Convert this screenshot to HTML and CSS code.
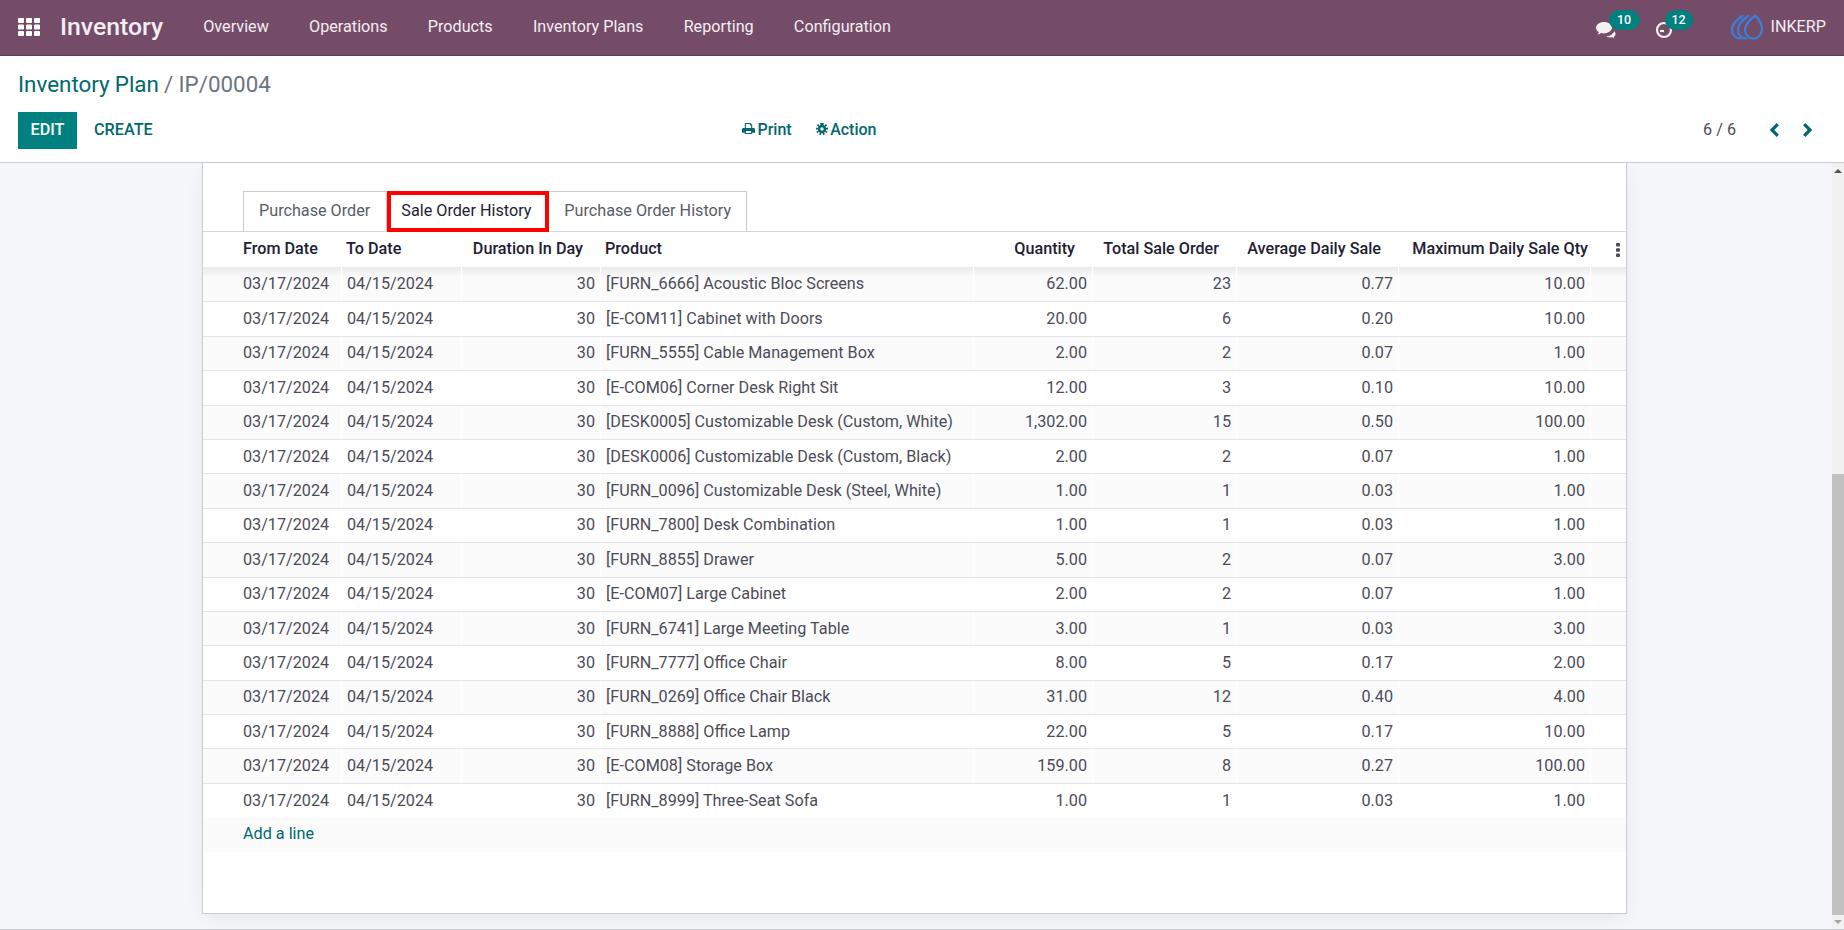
FILE: index.html
```html
<!DOCTYPE html>
<html>
	<head>
		<meta charset="UTF-8">
		<title>Inventory Plan / IP/00004</title>
		<link rel="stylesheet" href="styles.css">
	</head>
	<body>
		<header class="navbar">
			<svg class="apps" viewBox="0 0 22 18" width="22" height="18" fill="#fff">
				<rect x="0" y="0" width="6" height="5" rx="1"/><rect x="8" y="0" width="6" height="5" rx="1"/><rect x="16" y="0" width="6" height="5" rx="1"/>
				<rect x="0" y="6.5" width="6" height="5" rx="1"/><rect x="8" y="6.5" width="6" height="5" rx="1"/><rect x="16" y="6.5" width="6" height="5" rx="1"/>
				<rect x="0" y="13" width="6" height="5" rx="1"/><rect x="8" y="13" width="6" height="5" rx="1"/><rect x="16" y="13" width="6" height="5" rx="1"/>
			</svg>
			<span class="brand">Inventory</span>
			<nav class="menu">
				<a>Overview</a>
				<a>Operations</a>
				<a>Products</a>
				<a>Inventory Plans</a>
				<a>Reporting</a>
				<a>Configuration</a>
			</nav>
			<div class="systray">
				<div class="tray-item tray-chat">
					<svg viewBox="0 0 20 18" width="20" height="18"><path fill="#f4f1f3" d="M8 1C3.600 1 0 3.600 0 6.800c0 1.800 1.100 3.400 2.900 4.500-.3 1-.8 1.800-1.500 2.500 1.400-.2 2.800-.8 3.900-1.700.9.200 1.800.3 2.700.3 4.400 0 8-2.600 8-5.800S12.400 1 8 1z"/><path fill="#f4f1f3" stroke="#744c68" d="M18 9.500c1.300 1 2 2.200 2 3.500 0 1.300-.8 2.500-2.100 3.300.2.600.5 1.100 1 1.600-1-.1-2-.5-2.700-1.100-.6.100-1.200.2-1.800.2-2 0-3.800-.8-4.800-2 4.400-.1 7.800-2.400 8.400-5.500z"/></svg>
					<span class="badge badge-chat">10</span>
				</div>
				<div class="tray-item tray-clock">
					<svg viewBox="0 0 18 18" width="18" height="18" fill="none" stroke="#f4f1f3" stroke-width="2.200"><circle cx="9" cy="9" r="7"/><path d="M5 10h4"/></svg>
					<span class="badge badge-clock">12</span>
				</div>
				<svg class="logo" viewBox="0 0 32 26" width="32" height="26" fill="none" stroke="#3a80d8" stroke-width="2.200" stroke-linecap="round">
					<path d="M24.500 1.500c2.500 3 6.500 7 6.500 13 0 5.500-3.500 10-8.500 10-5 0-8.500-4-8.500-8.500 0-5.500 6-11.500 10.500-14.500z"/>
					<path d="M17 2c-5 3.500-10 9-10 14 0 4.500 3.500 8.500 8.500 8.500"/>
					<path d="M11.500 2C6 5.500 1 10.500 1 16c0 4.500 3.500 8.500 8.500 8.500"/>
				</svg>
				<span class="company">INKERP</span>
			</div>
		</header>

		<section class="control-panel">
			<div class="breadcrumb"><a>Inventory Plan</a> <span class="crumb-sep">/</span> <span class="crumb-current">IP/00004</span></div>
			<div class="panel-row">
				<div class="panel-left">
					<button class="btn btn-edit">EDIT</button>
					<button class="btn btn-create">CREATE</button>
				</div>
				<div class="panel-center">
					<a class="panel-link link-print">
						<svg viewBox="0 0 14 14" width="13" height="13" fill="#00696e" fill-rule="evenodd"><path d="M3 1h6l2 2v3.500h1.500A1.500 1.500 0 0 1 14 8v3.500h-3V13H3v-1.500H0V8a1.500 1.500 0 0 1 1.500-1.500H3zM4.200 2.200v4.300h5.600V3.600H8.500V2.200zM4.200 9.800v2h5.600v-2z"/></svg>
						Print
					</a>
					<a class="panel-link link-action">
						<svg viewBox="0 0 14 14" width="12" height="12" fill="none" stroke="#00696e"><circle cx="7" cy="7" r="3.500" stroke-width="3"/><path stroke-width="2.400" stroke-dasharray="2 1.920" d="M7 1a6 6 0 1 1-.01 0"/></svg>
						Action
					</a>
				</div>
				<div class="pager">
					<span class="pager-value">6 / 6</span>
					<svg viewBox="0 0 10 14" width="10" height="14" fill="none" stroke="#00696e" stroke-width="3.200"><path d="M8.800 1.200 3 7l5.800 5.800"/></svg>
					<svg viewBox="0 0 10 14" width="10" height="14" fill="none" stroke="#00696e" stroke-width="3.200"><path d="M1.200 1.200 7 7l-5.800 5.800"/></svg>
				</div>
			</div>
		</section>

		<div class="content">
			<main class="view">
				<div class="sheet">
					<ul class="tabs">
						<li>Purchase Order</li>
						<li class="active">Sale Order History</li>
						<li>Purchase Order History</li>
					</ul>
					<table class="lines">
						<colgroup>
							<col class="c-from"><col class="c-to"><col class="c-dur"><col class="c-prod"><col class="c-qty"><col class="c-total"><col class="c-avg"><col class="c-max"><col class="c-opt">
						</colgroup>
						<thead>
							<tr>
								<th class="first">From Date</th>
								<th>To Date</th>
								<th class="num">Duration In Day</th>
								<th>Product</th>
								<th class="num">Quantity</th>
								<th class="num">Total Sale Order</th>
								<th class="num">Average Daily Sale</th>
								<th class="num th-max">Maximum Daily Sale Qty</th>
								<th class="th-opt"><svg viewBox="0 0 4 14" width="4" height="14" fill="#4c4c5c"><rect width="4" height="3.500" rx="1" y="0"/><rect width="4" height="3.500" rx="1" y="5.200"/><rect width="4" height="3.500" rx="1" y="10.400"/></svg></th>
							</tr>
						</thead>
						<tbody>
							<tr><td class="first">03/17/2024</td><td>04/15/2024</td><td class="num">30</td><td>[FURN_6666] Acoustic Bloc Screens</td><td class="num">62.00</td><td class="num">23</td><td class="num">0.77</td><td class="num">10.00</td><td></td></tr>
							<tr><td class="first">03/17/2024</td><td>04/15/2024</td><td class="num">30</td><td>[E-COM11] Cabinet with Doors</td><td class="num">20.00</td><td class="num">6</td><td class="num">0.20</td><td class="num">10.00</td><td></td></tr>
							<tr><td class="first">03/17/2024</td><td>04/15/2024</td><td class="num">30</td><td>[FURN_5555] Cable Management Box</td><td class="num">2.00</td><td class="num">2</td><td class="num">0.07</td><td class="num">1.00</td><td></td></tr>
							<tr><td class="first">03/17/2024</td><td>04/15/2024</td><td class="num">30</td><td>[E-COM06] Corner Desk Right Sit</td><td class="num">12.00</td><td class="num">3</td><td class="num">0.10</td><td class="num">10.00</td><td></td></tr>
							<tr><td class="first">03/17/2024</td><td>04/15/2024</td><td class="num">30</td><td>[DESK0005] Customizable Desk (Custom, White)</td><td class="num">1,302.00</td><td class="num">15</td><td class="num">0.50</td><td class="num">100.00</td><td></td></tr>
							<tr><td class="first">03/17/2024</td><td>04/15/2024</td><td class="num">30</td><td>[DESK0006] Customizable Desk (Custom, Black)</td><td class="num">2.00</td><td class="num">2</td><td class="num">0.07</td><td class="num">1.00</td><td></td></tr>
							<tr><td class="first">03/17/2024</td><td>04/15/2024</td><td class="num">30</td><td>[FURN_0096] Customizable Desk (Steel, White)</td><td class="num">1.00</td><td class="num">1</td><td class="num">0.03</td><td class="num">1.00</td><td></td></tr>
							<tr><td class="first">03/17/2024</td><td>04/15/2024</td><td class="num">30</td><td>[FURN_7800] Desk Combination</td><td class="num">1.00</td><td class="num">1</td><td class="num">0.03</td><td class="num">1.00</td><td></td></tr>
							<tr><td class="first">03/17/2024</td><td>04/15/2024</td><td class="num">30</td><td>[FURN_8855] Drawer</td><td class="num">5.00</td><td class="num">2</td><td class="num">0.07</td><td class="num">3.00</td><td></td></tr>
							<tr><td class="first">03/17/2024</td><td>04/15/2024</td><td class="num">30</td><td>[E-COM07] Large Cabinet</td><td class="num">2.00</td><td class="num">2</td><td class="num">0.07</td><td class="num">1.00</td><td></td></tr>
							<tr><td class="first">03/17/2024</td><td>04/15/2024</td><td class="num">30</td><td>[FURN_6741] Large Meeting Table</td><td class="num">3.00</td><td class="num">1</td><td class="num">0.03</td><td class="num">3.00</td><td></td></tr>
							<tr><td class="first">03/17/2024</td><td>04/15/2024</td><td class="num">30</td><td>[FURN_7777] Office Chair</td><td class="num">8.00</td><td class="num">5</td><td class="num">0.17</td><td class="num">2.00</td><td></td></tr>
							<tr><td class="first">03/17/2024</td><td>04/15/2024</td><td class="num">30</td><td>[FURN_0269] Office Chair Black</td><td class="num">31.00</td><td class="num">12</td><td class="num">0.40</td><td class="num">4.00</td><td></td></tr>
							<tr><td class="first">03/17/2024</td><td>04/15/2024</td><td class="num">30</td><td>[FURN_8888] Office Lamp</td><td class="num">22.00</td><td class="num">5</td><td class="num">0.17</td><td class="num">10.00</td><td></td></tr>
							<tr><td class="first">03/17/2024</td><td>04/15/2024</td><td class="num">30</td><td>[E-COM08] Storage Box</td><td class="num">159.00</td><td class="num">8</td><td class="num">0.27</td><td class="num">100.00</td><td></td></tr>
							<tr><td class="first">03/17/2024</td><td>04/15/2024</td><td class="num">30</td><td>[FURN_8999] Three-Seat Sofa</td><td class="num">1.00</td><td class="num">1</td><td class="num">0.03</td><td class="num">1.00</td><td></td></tr>
							<tr class="add-row"><td class="first" colspan="9"><a>Add a line</a></td></tr>
						</tbody>
					</table>
				</div>
			</main>
			<div class="scrollbar">
				<span class="arrow-up"></span>
				<div class="track"><div class="thumb"></div></div>
				<span class="arrow-down"></span>
			</div>
		</div>
	</body>
</html>
```

FILE: styles.css
```css
*{
	margin:0; padding:0;
	box-sizing:border-box;
	list-style:none;
}

html,body{
	height:100%;
	overflow:hidden;
}

body{
	display:flex;
	flex-direction:column;
	font-family:Roboto,"Noto Sans",sans-serif;
	font-size:16.200px;
	color:#4c4c58;
	background:#fff;
}

a{
	color:#00696e;
}

/* top bar */
.navbar{
	flex:none;
	height:56px;
	padding-bottom:2px;
	display:flex;
	align-items:center;
	background:#744c68;
	border-bottom:1px solid #5b3c52;
	color:#fff;
}

.apps{
	margin-left:18px;
}

.brand{
	margin-left:20px;
	font-size:24.800px;
	font-weight:500;
	color:#f3eef1;
}

.menu{
	display:flex;
	gap:40.200px;
	margin-left:40px;
}

.menu a{
	color:#f3eef1;
}

.systray{
	margin-left:auto;
	display:flex;
	align-items:center;
	padding-right:18px;
}

.tray-item{
	position:relative;
	display:flex;
}

.tray-chat{
	margin-right:39px;
	margin-top:6px;
}

.tray-clock{
	margin-right:58px;
	margin-top:6px;
}

.badge{
	position:absolute;
	height:20px;
	line-height:19px;
	border-radius:10px;
	background:#00807f;
	color:#fff;
	font-size:12.500px;
	font-weight:500;
	text-align:center;
}

.badge-chat{
	left:13px;
	top:-11px;
	width:31px;
}

.badge-clock{
	left:10px;
	top:-11px;
	width:28px;
}

.company{
	margin-left:8px;
	color:#f3eef1;
}

/* control panel */
.control-panel{
	flex:none;
	height:107px;
	padding:0 18px;
	border-bottom:1px solid #c9ccd2;
	background:#fff;
}

.breadcrumb{
	padding-top:13px;
	height:56px;
	font-size:22.400px;
	line-height:30px;
	word-spacing:-.4px;
}

.crumb-sep,.crumb-current{
	color:#6c757d;
}

.panel-row{
	display:grid;
	grid-template-columns:724px 1fr auto;
	align-items:center;
	height:37px;
}

.btn{
	border:0;
	font:500 16.200px Roboto,sans-serif;
	height:37px;
	padding-bottom:2px;
	background:none;
	color:#00696e;
}

.btn-edit{
	width:59px;
	background:#00807f;
	color:#fff;
}

.btn-create{
	margin-left:13px;
}

.panel-center{
	display:flex;
	gap:24px;
	padding-bottom:2px;
}

.panel-link{
	font-weight:500;
	font-size:16px;
}

.panel-link svg{
	margin-right:-1.500px;
}

.pager{
	display:flex;
	align-items:center;
	margin-right:13px;
	padding-bottom:2px;
}

.pager-value{
	margin-right:33px;
}

.pager svg+svg{
	margin-left:24px;
}

/* main area */
.content{
	flex:1;
	min-height:0;
	display:flex;
	background:#f5f6fa;
	border-bottom:1px solid #c9ccd2;
}

.view{
	flex:1;
	overflow:hidden;
	padding-left:202px;
}

.sheet{
	width:1425px;
	height:751px;
	padding-top:28px;
	background:#fff;
	border:1px solid #c9ccd2;
	border-top:0;
	box-shadow:0 5px 20px -5px rgba(0,0,0,.1);
}

.tabs{
	display:flex;
	height:41px;
	padding-left:40px;
	border-bottom:1px solid #d5d7dc;
}

.tabs li{
	height:41px;
	line-height:37px;
	padding:0 15px;
	color:#565e69;
	border:1px solid #c9ccd2;
	border-left:0;
}

.tabs li:first-child{
	padding-right:16px;
	border-left:1px solid #c9ccd2;
	border-bottom:0;
}

.tabs li:last-child{
	border-bottom:0;
}

.tabs .active{
	width:162px;
	padding:0 10px;
	line-height:31px;
	color:#1f2133;
	border:4px solid #f00;
}

.lines{
	width:1423px;
	table-layout:fixed;
	border-collapse:separate;
	border-spacing:0;
}

.c-from{width:138px;}
.c-to{width:120px;}
.c-dur{width:139px;}
.c-prod{width:373px;}
.c-qty{width:119px;}
.c-total{width:144px;}
.c-avg{width:162px;}
.c-max{width:192px;}
.c-opt{width:36px;}

.lines th{
	height:35px;
	padding:0 5px 2px;
	text-align:left;
	font-weight:500;
	color:#1f2133;
	white-space:nowrap;
}

.lines th.num{
	text-align:right;
	padding-right:17px;
}

.lines th.first{
	padding-left:40px;
}

.lines th.th-max{
	padding-right:2px;
}

.lines th.th-opt{
	padding:3px 0 0 26px;
}

.lines td{
	height:34.400px;
	padding:0 5px 1px;
	white-space:nowrap;
	border-top:1px solid #e4e5e9;
	border-left:1px solid #fff;
}

.lines tbody tr:first-child td{
	border-top:0;
	background-image:linear-gradient(rgba(0,0,0,.07),rgba(0,0,0,0) 10px);
}

.lines tbody tr:nth-child(odd) td{
	background-color:#fbfbfc;
}

.lines td.num{
	text-align:right;
}

.lines td.first{
	padding-left:40px;
	border-left:0;
}

.lines .add-row td{
	border-top:0;
	border-left:0;
}

/* scrollbar */
.scrollbar{
	flex:none;
	width:12px;
	display:flex;
	flex-direction:column;
	align-items:center;
	background:#f1f1f1;
}

.arrow-up,.arrow-down{
	flex:none;
	width:0;
	height:0;
	border-left:4px solid transparent;
	border-right:4px solid transparent;
}

.arrow-up{
	margin:6px 0 5px;
	border-bottom:4px solid #505050;
}

.arrow-down{
	margin:5px 0 5px;
	border-top:4px solid #a3a3a3;
}

.track{
	flex:1;
	width:100%;
	display:flex;
	flex-direction:column;
	justify-content:flex-end;
}

.thumb{
	height:441px;
	background:#c1c1c1;
}
```
